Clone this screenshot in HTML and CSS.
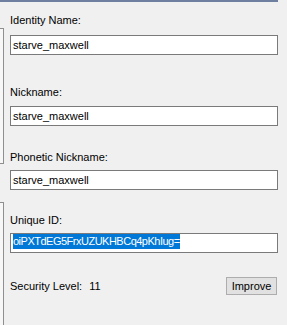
FILE: index.html
```html
<!DOCTYPE html>
<html>
<head>
<meta charset="utf-8">
<link rel="stylesheet" href="styles.css">
</head>
<body>
<div class="bar"></div>
<div class="content">
  <div class="side">
    <div class="box box-top"></div>
    <div class="box box-bottom"></div>
  </div>
  <div class="main">
    <div class="label l1">Identity Name:</div>
    <div class="field f1">starve_maxwell</div>
    <div class="label l2">Nickname:</div>
    <div class="field f2">starve_maxwell</div>
    <div class="label l3">Phonetic Nickname:</div>
    <div class="field f3">starve_maxwell</div>
    <div class="label l4">Unique ID:</div>
    <div class="field f4"><span class="sel">oiPXTdEG5FrxUZUKHBCq4pKhIug=</span></div>
    <div class="security">
      <div class="sec-text">Security Level:<span class="sec-val">11</span></div>
      <div class="button">Improve</div>
    </div>
  </div>
</div>
</body>
</html>
```
FILE: styles.css
```css
html, body {
  margin: 0;
  padding: 0;
  background: #f0f0f0;
  font-family: "Liberation Sans", Arial, sans-serif;
  font-size: 11px;
  color: #000;
  overflow: hidden;
}
.bar {
  width: 278px;
  height: 2px;
  background: #6f7f9f;
}
.content {
  display: flex;
  height: 323px;
}
.side {
  width: 4px;
  display: flex;
  flex-direction: column;
  padding-top: 26px;
  box-sizing: border-box;
}
.box {
  box-sizing: border-box;
  border: 1px solid #8f8f8f;
  border-left: none;
  background: #f7f7f7;
}
.box-top {
  height: 136px;
}
.box-bottom {
  margin-top: 38px;
  flex: 1;
  border-bottom: none;
}
.main {
  margin-left: 6px;
  width: 268px;
  display: flex;
  flex-direction: column;
}
.label {
  line-height: 13px;
  height: 13px;
  white-space: nowrap;
}
.l1 { margin-top: 12px; }
.l2 { margin-top: 31px; }
.l3 { margin-top: 25px; }
.l4 { margin-top: 24px; }
.field {
  box-sizing: border-box;
  height: 20px;
  border: 1px solid #7a7a7a;
  background: #fff;
  padding: 0 2px;
  line-height: 18px;
  white-space: nowrap;
  overflow: hidden;
}
.f1 { margin-top: 8px; }
.f2 { margin-top: 7px; }
.f3 { margin-top: 6px; }
.f4 { margin-top: 6px; }
.sel {
  display: inline-block;
  vertical-align: top;
  height: 15px;
  line-height: 15px;
  background: #0078d7;
  color: #fff;
  letter-spacing: -0.5px;
}
.security {
  margin-top: 24px;
  display: flex;
  align-items: center;
  justify-content: space-between;
}
.sec-text {
  line-height: 13px;
}
.sec-val {
  margin-left: 7px;
}
.button {
  box-sizing: border-box;
  width: 51px;
  height: 18px;
  margin-right: 1px;
  border: 1px solid #adadad;
  background: #e1e1e1;
  line-height: 16px;
  text-align: center;
}
```
